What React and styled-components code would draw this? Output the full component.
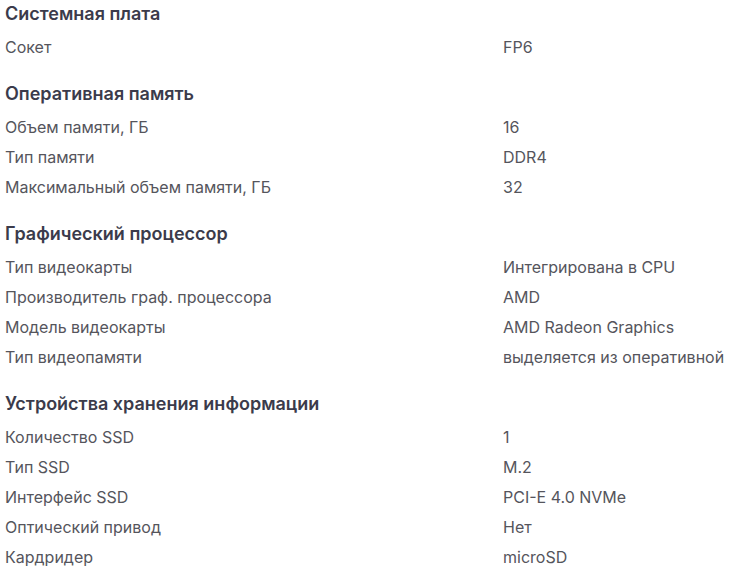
import React from "react";
import styled, { createGlobalStyle } from "styled-components";

const Global = createGlobalStyle`
  html, body { margin: 0; padding: 0; background: #fff; }
  body { font-family: Inter, "Noto Sans", sans-serif; }
`;

const Page = styled.div`
  padding: 0 0 0 5px;
  width: 725px;
`;

const Section = styled.section`
  & + & { margin-top: 18px; }
`;

const Heading = styled.h3`
  margin: 0;
  height: 32px;
  display: flex;
  align-items: center;
  font-size: 18px;
  font-weight: 600;
  color: #3b3b4b;
  padding-bottom: 5px;
  box-sizing: border-box;
`;

const Row = styled.div`
  display: grid;
  grid-template-columns: 498px 1fr;
  height: 30px;
  align-items: center;
  font-size: 16px;
  color: #55555c;
`;

const Cell = styled.span`
  white-space: nowrap;
`;

const data = [
  ["Системная плата", [["Сокет", "FP6"]]],
  [
    "Оперативная память",
    [
      ["Объем памяти, ГБ", "16"],
      ["Тип памяти", "DDR4"],
      ["Максимальный объем памяти, ГБ", "32"],
    ],
  ],
  [
    "Графический процессор",
    [
      ["Тип видеокарты", "Интегрирована в CPU"],
      ["Производитель граф. процессора", "AMD"],
      ["Модель видеокарты", "AMD Radeon Graphics"],
      ["Тип видеопамяти", "выделяется из оперативной"],
    ],
  ],
  [
    "Устройства хранения информации",
    [
      ["Количество SSD", "1"],
      ["Тип SSD", "M.2"],
      ["Интерфейс SSD", "PCI-E 4.0 NVMe"],
      ["Оптический привод", "Нет"],
      ["Кардридер", "microSD"],
    ],
  ],
];

export default function App() {
  return (
    <>
      <Global />
      <Page>
        {data.map(([title, rows]) => (
          <Section key={title}>
            <Heading>{title}</Heading>
            {rows.map(([k, v]) => (
              <Row key={k}>
                <Cell>{k}</Cell>
                <Cell>{v}</Cell>
              </Row>
            ))}
          </Section>
        ))}
      </Page>
    </>
  );
}
